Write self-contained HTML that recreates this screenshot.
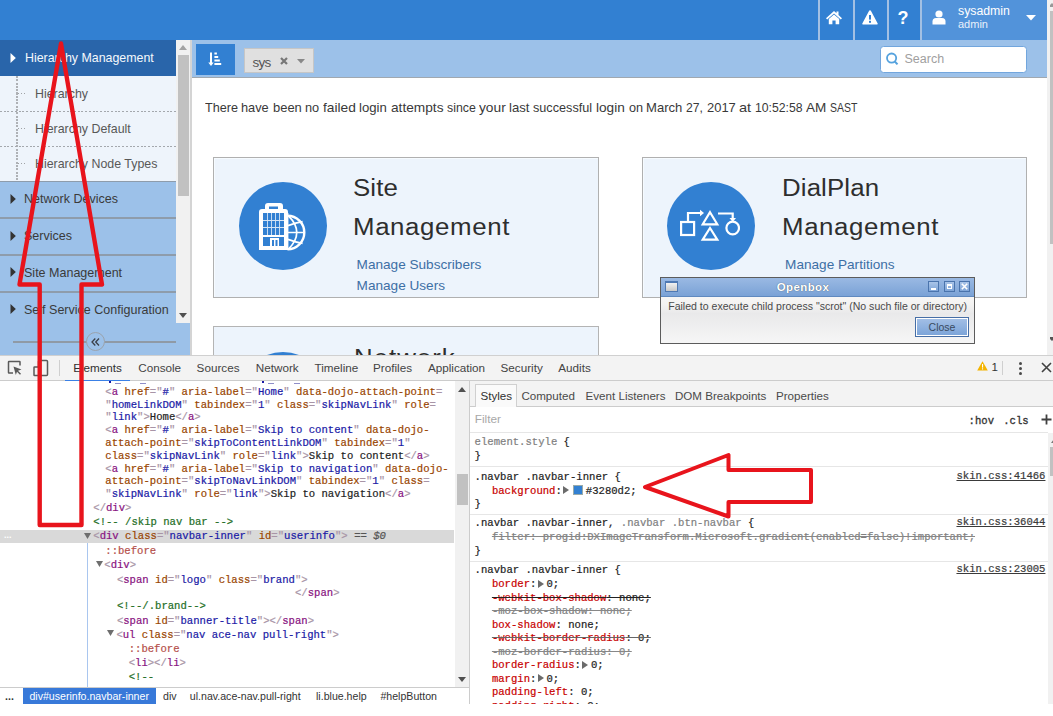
<!DOCTYPE html>
<html><head><meta charset="utf-8"><style>
html,body{margin:0;padding:0;width:1053px;height:716px;overflow:hidden;background:#fff;position:relative}
.t{position:absolute;white-space:pre;font-family:'Liberation Sans', sans-serif}
.m{-webkit-text-stroke-width:0.2px}
.b{position:absolute}
</style></head><body>
<div class="b" style="left:0px;top:0px;width:1047px;height:40px;background:#3280d2"></div>
<div class="b" style="left:818px;top:0px;width:2px;height:40px;background:#a3c0e3"></div>
<div class="b" style="left:853px;top:0px;width:2px;height:40px;background:#a3c0e3"></div>
<div class="b" style="left:887px;top:0px;width:2px;height:40px;background:#a3c0e3"></div>
<div class="b" style="left:920px;top:0px;width:2px;height:40px;background:#a3c0e3"></div>
<div class="b" style="left:922px;top:0px;width:125px;height:40px;background:#5293da"></div>
<svg class="b" style="left:825px;top:10px" width="18" height="15" viewBox="0 0 18 15">
<path d="M9 1 L1 8.2 L2.2 9.4 L9 3.4 L15.8 9.4 L17 8.2 L13.5 5.1 L13.5 1.5 L11.5 1.5 L11.5 3.3 Z" fill="#fff"/>
<path d="M3.8 9 L9 4.5 L14.2 9 L14.2 14.2 L10.6 14.2 L10.6 10.6 L7.4 10.6 L7.4 14.2 L3.8 14.2 Z" fill="#fff"/>
</svg>
<svg class="b" style="left:862px;top:10px" width="16" height="15" viewBox="0 0 16 15">
<path d="M8 0.3 Q8.7 0.3 9 1 L15.7 13.4 Q16 14.4 15 14.4 L1 14.4 Q0 14.4 0.3 13.4 L7 1 Q7.3 0.3 8 0.3 Z" fill="#fff"/>
<rect x="7" y="5" width="2" height="4.6" fill="#3280d2"/>
<rect x="7" y="10.8" width="2" height="2" fill="#3280d2"/>
</svg>
<div class="t" style="left:897.50px;top:9.07px;font-size:18px;line-height:18px;color:#fff;font-family:'Liberation Sans', sans-serif;font-weight:bold">?</div>
<svg class="b" style="left:932px;top:10px" width="14" height="15" viewBox="0 0 14 15">
<circle cx="7" cy="4" r="3.6" fill="#fff"/>
<path d="M0.5 14.5 L0.5 11.5 Q0.5 8.3 4 8 L10 8 Q13.5 8.3 13.5 11.5 L13.5 14.5 Z" fill="#fff"/>
</svg>
<div class="t" style="left:958.00px;top:4.59px;font-size:12.3px;line-height:12.3px;color:#fff;font-family:'Liberation Sans', sans-serif;">sysadmin</div>
<div class="t" style="left:958.00px;top:18.69px;font-size:11px;line-height:11px;color:#e8f0fa;font-family:'Liberation Sans', sans-serif;">admin</div>
<svg class="b" style="left:1026px;top:15px" width="10" height="6" viewBox="0 0 10 6"><path d="M0 0 L10 0 L5 5.5 Z" fill="#fff"/></svg>
<div class="b" style="left:1047px;top:0px;width:6px;height:355px;background:#f1f1f1"></div>
<div class="b" style="left:1050px;top:11px;width:3px;height:233px;background:#c1c1c1"></div>
<svg class="b" style="left:1050px;top:337px" width="3" height="4" viewBox="0 0 3 4"><path d="M-2 0 L6 0 L2 4 Z" fill="#555"/></svg>
<svg class="b" style="left:1050px;top:3px" width="3" height="4" viewBox="0 0 3 4"><path d="M-2 4 L6 4 L2 0 Z" fill="#999"/></svg>
<div class="b" style="left:0px;top:40px;width:190px;height:315px;background:#9cc1e9"></div>
<div class="b" style="left:0px;top:40px;width:176px;height:36px;background:#2965aa"></div>
<svg class="b" style="left:10px;top:53px" width="6" height="10" viewBox="0 0 6 10"><path d="M0.5 0 L5.8 5 L0.5 10 Z" fill="#fff"/></svg>
<div class="t" style="left:25.00px;top:52.41px;font-size:12.4px;line-height:12.4px;color:#f4f8fc;font-family:'Liberation Sans', sans-serif;">Hierarchy Management</div>
<div class="b" style="left:0px;top:76px;width:176px;height:105px;background:#eef4fb"></div>
<div class="b" style="left:16px;top:76px;width:1.5px;height:105px;background:repeating-linear-gradient(180deg,#aeb1b5 0 2px,transparent 2px 3.3px)"></div>
<div class="b" style="left:18px;top:93px;width:8px;height:1px;background:repeating-linear-gradient(90deg,#a0a3a6 0 1.5px,transparent 1.5px 3px)"></div>
<div class="t" style="left:35.00px;top:87.51px;font-size:12.4px;line-height:12.4px;color:#585858;font-family:'Liberation Sans', sans-serif;">Hierarchy</div>
<div class="b" style="left:18px;top:128px;width:8px;height:1px;background:repeating-linear-gradient(90deg,#a0a3a6 0 1.5px,transparent 1.5px 3px)"></div>
<div class="b" style="left:0;top:111px;width:176px;height:1px;background:repeating-linear-gradient(90deg,#a4a8ad 0 2px,transparent 2px 3.7px)"></div>
<div class="t" style="left:35.00px;top:122.51px;font-size:12.4px;line-height:12.4px;color:#585858;font-family:'Liberation Sans', sans-serif;">Hierarchy Default</div>
<div class="b" style="left:18px;top:163px;width:8px;height:1px;background:repeating-linear-gradient(90deg,#a0a3a6 0 1.5px,transparent 1.5px 3px)"></div>
<div class="b" style="left:0;top:146px;width:176px;height:1px;background:repeating-linear-gradient(90deg,#a4a8ad 0 2px,transparent 2px 3.7px)"></div>
<div class="t" style="left:35.00px;top:157.51px;font-size:12.4px;line-height:12.4px;color:#585858;font-family:'Liberation Sans', sans-serif;">Hierarchy Node Types</div>
<div class="b" style="left:0;top:180.5px;width:176px;height:1.6px;background:#8e9cab"></div>
<svg class="b" style="left:10px;top:194.0px" width="6" height="10" viewBox="0 0 6 10"><path d="M0.5 0 L5.8 5 L0.5 10 Z" fill="#333"/></svg>
<div class="t" style="left:24.00px;top:193.41px;font-size:12.52px;line-height:12.52px;color:#3a3a3a;font-family:'Liberation Sans', sans-serif;">Network Devices</div>
<div class="b" style="left:0;top:217px;width:176px;height:1.6px;background:#8e9cab"></div>
<svg class="b" style="left:10px;top:230.7px" width="6" height="10" viewBox="0 0 6 10"><path d="M0.5 0 L5.8 5 L0.5 10 Z" fill="#333"/></svg>
<div class="t" style="left:24.00px;top:230.11px;font-size:12.52px;line-height:12.52px;color:#3a3a3a;font-family:'Liberation Sans', sans-serif;">Services</div>
<div class="b" style="left:0;top:254px;width:176px;height:1.6px;background:#8e9cab"></div>
<svg class="b" style="left:10px;top:267.4px" width="6" height="10" viewBox="0 0 6 10"><path d="M0.5 0 L5.8 5 L0.5 10 Z" fill="#333"/></svg>
<div class="t" style="left:24.00px;top:266.81px;font-size:12.52px;line-height:12.52px;color:#3a3a3a;font-family:'Liberation Sans', sans-serif;">Site Management</div>
<div class="b" style="left:0;top:291px;width:176px;height:1.6px;background:#8e9cab"></div>
<svg class="b" style="left:10px;top:304.1px" width="6" height="10" viewBox="0 0 6 10"><path d="M0.5 0 L5.8 5 L0.5 10 Z" fill="#333"/></svg>
<div class="t" style="left:24.00px;top:303.51px;font-size:12.52px;line-height:12.52px;color:#3a3a3a;font-family:'Liberation Sans', sans-serif;">Self Service Configuration</div>
<div class="b" style="left:176px;top:40px;width:14px;height:283px;background:#f1f1f1"></div>
<div class="b" style="left:178px;top:55px;width:11px;height:141px;background:#c1c1c1"></div>
<svg class="b" style="left:179px;top:45px" width="8" height="5" viewBox="0 0 8 5"><path d="M0 5 L4 0 L8 5 Z" fill="#a3a3a3"/></svg>
<svg class="b" style="left:179px;top:313px" width="8" height="5" viewBox="0 0 8 5"><path d="M0 0 L4 5 L8 0 Z" fill="#505050"/></svg>
<div class="b" style="left:13px;top:341px;width:163px;height:1.5px;background:#8f9aa6"></div>
<div class="b" style="left:86px;top:332px;width:19px;height:19px;border-radius:50%;border:1px solid #9aa3ad;background:#9cc1e9;box-sizing:border-box"></div>
<svg class="b" style="left:91px;top:337.5px" width="9" height="8" viewBox="0 0 9 8"><path d="M4.3 0.5 L1 4 L4.3 7.5 M8 0.5 L4.7 4 L8 7.5" stroke="#3a3f48" stroke-width="1.3" fill="none"/></svg>
<div class="b" style="left:190px;top:40px;width:2px;height:315px;background:#d4d4d4"></div>
<div class="b" style="left:192px;top:40px;width:855px;height:37px;background:#9cc1e9"></div>
<div class="b" style="left:192px;top:77px;width:855px;height:1px;background:#a0a8b0"></div>
<div class="b" style="left:196px;top:44px;width:39px;height:31px;background:#3280d2"></div>
<svg class="b" style="left:208px;top:52px" width="14" height="15" viewBox="0 0 14 15">
<rect x="2" y="0.5" width="2" height="11" fill="#fff"/>
<path d="M0.3 10.6 L5.7 10.6 L3 14 Z" fill="#fff"/>
<rect x="6.4" y="0.5" width="2.5" height="2" fill="#fff"/>
<rect x="6.4" y="4" width="3.8" height="2" fill="#fff"/>
<rect x="6.4" y="7.5" width="5.4" height="2" fill="#fff"/>
<rect x="6.4" y="11" width="6.8" height="2" fill="#fff"/>
</svg>
<div class="b" style="left:244px;top:48px;width:70px;height:25px;background:#e0e0e0;border:1px solid #c6c6c6;box-sizing:border-box"></div>
<div class="t" style="left:252.50px;top:56.08px;font-size:13.5px;line-height:13.5px;color:#555;font-family:'Liberation Sans', sans-serif;letter-spacing:-0.8px">sys</div>
<svg class="b" style="left:280px;top:57px" width="8" height="8" viewBox="0 0 8 8"><path d="M1 1 L7 7 M7 1 L1 7" stroke="#777" stroke-width="2.2"/></svg>
<svg class="b" style="left:297px;top:58.5px" width="8" height="5" viewBox="0 0 8 5"><path d="M0 0 L8 0 L4 4.5 Z" fill="#888"/></svg>
<div class="b" style="left:880px;top:46px;width:146.5px;height:27px;background:#fff;border:1px solid #72a6dd;border-radius:3.5px;box-sizing:border-box"></div>
<svg class="b" style="left:885px;top:52px" width="15" height="15" viewBox="0 0 15 15"><circle cx="6.6" cy="6.1" r="4.6" stroke="#55a2de" stroke-width="1.8" fill="none"/><path d="M9.8 9.5 L12.5 12.4" stroke="#55a2de" stroke-width="2"/></svg>
<div class="t" style="left:904.50px;top:52.92px;font-size:12.5px;line-height:12.5px;color:#a0a0a0;font-family:'Liberation Sans', sans-serif;">Search</div>
<div class="b" style="left:192px;top:78px;width:855px;height:277px;background:#fff"></div>
<div class="t" style="left:204.60px;top:102.17px;font-size:12.8px;line-height:12.8px;color:#393939;font-family:'Liberation Sans', sans-serif;transform:scaleX(0.987);transform-origin:0 0">There</div>
<div class="t" style="left:241.20px;top:102.17px;font-size:12.8px;line-height:12.8px;color:#393939;font-family:'Liberation Sans', sans-serif;transform:scaleX(0.998);transform-origin:0 0">have</div>
<div class="t" style="left:272.50px;top:102.17px;font-size:12.8px;line-height:12.8px;color:#393939;font-family:'Liberation Sans', sans-serif;transform:scaleX(1.012);transform-origin:0 0">been</div>
<div class="t" style="left:304.90px;top:102.17px;font-size:12.8px;line-height:12.8px;color:#393939;font-family:'Liberation Sans', sans-serif;transform:scaleX(0.998);transform-origin:0 0">no</div>
<div class="t" style="left:322.70px;top:102.17px;font-size:12.8px;line-height:12.8px;color:#393939;font-family:'Liberation Sans', sans-serif;transform:scaleX(1.075);transform-origin:0 0">failed</div>
<div class="t" style="left:359.20px;top:102.17px;font-size:12.8px;line-height:12.8px;color:#393939;font-family:'Liberation Sans', sans-serif;transform:scaleX(1.028);transform-origin:0 0">login</div>
<div class="t" style="left:390.60px;top:102.17px;font-size:12.8px;line-height:12.8px;color:#393939;font-family:'Liberation Sans', sans-serif;transform:scaleX(1.07);transform-origin:0 0">attempts</div>
<div class="t" style="left:446.70px;top:102.17px;font-size:12.8px;line-height:12.8px;color:#393939;font-family:'Liberation Sans', sans-serif;transform:scaleX(0.964);transform-origin:0 0">since</div>
<div class="t" style="left:479.10px;top:102.17px;font-size:12.8px;line-height:12.8px;color:#393939;font-family:'Liberation Sans', sans-serif;transform:scaleX(1.073);transform-origin:0 0">your</div>
<div class="t" style="left:509.40px;top:102.17px;font-size:12.8px;line-height:12.8px;color:#393939;font-family:'Liberation Sans', sans-serif;transform:scaleX(1.024);transform-origin:0 0">last</div>
<div class="t" style="left:533.40px;top:102.17px;font-size:12.8px;line-height:12.8px;color:#393939;font-family:'Liberation Sans', sans-serif;transform:scaleX(0.989);transform-origin:0 0">successful</div>
<div class="t" style="left:596.10px;top:102.17px;font-size:12.8px;line-height:12.8px;color:#393939;font-family:'Liberation Sans', sans-serif;transform:scaleX(1.065);transform-origin:0 0">login</div>
<div class="t" style="left:628.50px;top:102.17px;font-size:12.8px;line-height:12.8px;color:#393939;font-family:'Liberation Sans', sans-serif;transform:scaleX(0.991);transform-origin:0 0">on</div>
<div class="t" style="left:646.20px;top:102.17px;font-size:12.8px;line-height:12.8px;color:#393939;font-family:'Liberation Sans', sans-serif;transform:scaleX(1.021);transform-origin:0 0">March</div>
<div class="t" style="left:686.10px;top:102.17px;font-size:12.8px;line-height:12.8px;color:#393939;font-family:'Liberation Sans', sans-serif;transform:scaleX(0.95);transform-origin:0 0">27,</div>
<div class="t" style="left:706.60px;top:102.17px;font-size:12.8px;line-height:12.8px;color:#393939;font-family:'Liberation Sans', sans-serif;transform:scaleX(1.012);transform-origin:0 0">2017</div>
<div class="t" style="left:739.00px;top:102.17px;font-size:12.8px;line-height:12.8px;color:#393939;font-family:'Liberation Sans', sans-serif;transform:scaleX(1.134);transform-origin:0 0">at</div>
<div class="t" style="left:754.70px;top:102.17px;font-size:12.8px;line-height:12.8px;color:#393939;font-family:'Liberation Sans', sans-serif;transform:scaleX(0.956);transform-origin:0 0">10:52:58</div>
<div class="t" style="left:805.90px;top:102.17px;font-size:12.8px;line-height:12.8px;color:#393939;font-family:'Liberation Sans', sans-serif;transform:scaleX(1.058);transform-origin:0 0">AM</div>
<div class="t" style="left:829.80px;top:102.17px;font-size:12.8px;line-height:12.8px;color:#393939;font-family:'Liberation Sans', sans-serif;transform:scaleX(0.817);transform-origin:0 0">SAST</div>
<div class="b" style="left:213px;top:157px;width:386px;height:141px;background:#edf4fc;border:1px solid #b0b0b0;box-sizing:border-box;box-shadow:inset 1px 1px 0 #f6fbff"></div>
<div class="b" style="left:239px;top:182px;width:88px;height:88px;border-radius:50%;background:#3280d2"></div>
<svg class="b" style="left:259px;top:203px" width="48" height="50" viewBox="0 0 48 50">
<path d="M0 9 Q0 6 3 6 L6 6 L6 3 Q6 0 9 0 L21 0 Q24 0 24 3 L24 6 L26 6 Q29 6 29 9 L29 47 L0 47 Z" fill="#fff"/>
<rect x="10" y="3.5" width="9" height="2.5" fill="#3280d2"/>
<g fill="#3280d2">
<rect x="4" y="10" width="21" height="22"/>
<rect x="4" y="34" width="21" height="9"/>
</g>
<g fill="#fff">
<g opacity="0.8"><rect x="8.1" y="10" width="0.9" height="22"/><rect x="12.1" y="10" width="0.9" height="22"/><rect x="16.1" y="10" width="0.9" height="22"/><rect x="20.1" y="10" width="0.9" height="22"/>
<rect x="4" y="17" width="21" height="1"/><rect x="4" y="24" width="21" height="1"/></g>
<rect x="11" y="35" width="9" height="12"/>
</g>
<rect x="13" y="37" width="2" height="6" fill="#3280d2"/><rect x="16.5" y="37" width="2" height="6" fill="#3280d2"/>
<path d="M28.5 12.7 A16.8 16.8 0 0 1 28.5 46.3" stroke="#fff" stroke-width="2.4" fill="none"/>
<path d="M29.5 12.9 Q46 29.5 29.5 46.1" stroke="#fff" stroke-width="1.7" fill="none"/>
<path d="M29 22.6 Q37 19.6 43.6 18.6 M29 29.5 L45.5 29.5 M29 36.4 Q37 39.4 43.6 40.4" stroke="#fff" stroke-width="1.7" fill="none"/>
<path d="M28.6 10 L28.6 47" stroke="#fff" stroke-width="1.6"/>
</svg>
<div class="t" style="left:353.30px;top:177.42px;font-size:23.5px;line-height:23.5px;color:#2e2e2e;font-family:'Liberation Sans', sans-serif;letter-spacing:0.1px;transform:scaleX(1.1);transform-origin:0 0">Site</div>
<div class="t" style="left:353.30px;top:215.72px;font-size:23.5px;line-height:23.5px;color:#2e2e2e;font-family:'Liberation Sans', sans-serif;letter-spacing:0.55px;transform:scaleX(1.1);transform-origin:0 0">Management</div>
<div class="t" style="left:356.60px;top:258.09px;font-size:13.6px;line-height:13.6px;color:#3d6fa5;font-family:'Liberation Sans', sans-serif;">Manage Subscribers</div>
<div class="t" style="left:356.60px;top:278.89px;font-size:13.6px;line-height:13.6px;color:#3d6fa5;font-family:'Liberation Sans', sans-serif;">Manage Users</div>
<div class="b" style="left:642px;top:157px;width:385px;height:141px;background:#edf4fc;border:1px solid #b0b0b0;box-sizing:border-box;box-shadow:inset 1px 1px 0 #f6fbff"></div>
<div class="b" style="left:667.0px;top:182px;width:88px;height:88px;border-radius:50%;background:#3280d2"></div>
<svg class="b" style="left:680.0px;top:209px" width="60" height="34" viewBox="0 0 60 34">
<g stroke="#fff" stroke-width="2.2" fill="none">
<rect x="1.1" y="13" width="13" height="13"/>
<path d="M8 13 L8 4 L20 4"/>
<path d="M30 3.2 L37.3 15.3 L22.7 15.3 Z"/>
<path d="M30 19 L37.3 30.6 L22.7 30.6 Z"/>
<path d="M38 4.5 L52.7 4.5 L52.7 9"/>
<circle cx="52.7" cy="19" r="6.3"/>
</g>
<path d="M20 0.8 L24 4 L20 7.2 Z" fill="#fff"/>
<path d="M49.5 9 L56 9 L52.7 13 Z" fill="#fff"/>
</svg>
<div class="t" style="left:781.80px;top:177.42px;font-size:23.5px;line-height:23.5px;color:#2e2e2e;font-family:'Liberation Sans', sans-serif;letter-spacing:0.1px;transform:scaleX(1.1);transform-origin:0 0">DialPlan</div>
<div class="t" style="left:781.80px;top:215.72px;font-size:23.5px;line-height:23.5px;color:#2e2e2e;font-family:'Liberation Sans', sans-serif;letter-spacing:0.55px;transform:scaleX(1.1);transform-origin:0 0">Management</div>
<div class="t" style="left:785.10px;top:258.09px;font-size:13.6px;line-height:13.6px;color:#3d6fa5;font-family:'Liberation Sans', sans-serif;">Manage Partitions</div>
<div class="b" style="left:213px;top:326px;width:386px;height:29px;overflow:hidden">
<div class="b" style="left:0;top:0;width:386px;height:141px;background:#edf4fc;border:1px solid #b4b4b4;box-sizing:border-box"></div>
<div class="b" style="left:26px;top:26px;width:88px;height:88px;border-radius:50%;background:#3280d2"></div>
<div class="t" style="left:141.30px;top:21.12px;font-size:23.5px;line-height:23.5px;color:#2e2e2e;font-family:'Liberation Sans', sans-serif;letter-spacing:0.9px;transform:scaleX(1.1);transform-origin:0 0">Network</div>
</div>
<div class="b" style="left:660px;top:277px;width:315px;height:67px;border:1px solid #5c5c5c;box-sizing:border-box;background:linear-gradient(#fdfdfd 0%,#f4f3f2 40%,#e9e9ea 55%,#f6f6f6 100%)"></div>
<div class="b" style="left:661px;top:278px;width:313px;height:19px;background:linear-gradient(#9ab9e3,#7aa2d6);border-bottom:1px solid #5f89bf;box-sizing:border-box"></div>
<div class="b" style="left:665px;top:281px;width:13px;height:11px;border:1px solid #4f79b3;background:linear-gradient(#f2f2f2,#c8c8c8);box-sizing:border-box;border-top-width:2px"></div>
<div class="t" style="left:0.00px;top:282.07px;font-size:11.5px;line-height:11.5px;color:#fff;font-family:'Liberation Sans', sans-serif;left:753px;width:100px;text-align:center;font-weight:bold;letter-spacing:0.4px;text-shadow:0 0 1px #345">Openbox</div>
<div class="b" style="left:928px;top:281px;width:11px;height:11px;border:1px solid #4a74ad;background:linear-gradient(#a9c4e8,#7ea5d8);box-sizing:border-box"></div>
<div class="b" style="left:944px;top:281px;width:11px;height:11px;border:1px solid #4a74ad;background:linear-gradient(#a9c4e8,#7ea5d8);box-sizing:border-box"></div>
<div class="b" style="left:959px;top:281px;width:11px;height:11px;border:1px solid #4a74ad;background:linear-gradient(#a9c4e8,#7ea5d8);box-sizing:border-box"></div>
<div class="b" style="left:931px;top:288px;width:5px;height:2px;background:#fff"></div>
<div class="b" style="left:947px;top:284px;width:5px;height:5px;border:1px solid #fff;border-top-width:2px;box-sizing:border-box"></div>
<svg class="b" style="left:961px;top:283px" width="7" height="7" viewBox="0 0 7 7"><path d="M0.8 0.8 L6.2 6.2 M6.2 0.8 L0.8 6.2" stroke="#fff" stroke-width="1.6"/></svg>
<div class="t" style="left:668.20px;top:300.67px;font-size:10.55px;line-height:10.55px;color:#4a4a4a;font-family:'Liberation Sans', sans-serif;">Failed to execute child process &quot;scrot&quot; (No such file or directory)</div>
<div class="b" style="left:915px;top:317px;width:54px;height:20px;border:1px solid #466ea6;background:linear-gradient(#a4c0e6,#7aa3d8);box-sizing:border-box;box-shadow:inset 0 0 0 1px #fff"></div>
<div class="t" style="left:915.00px;top:321.62px;font-size:10.5px;line-height:10.5px;color:#3a4a60;font-family:'Liberation Sans', sans-serif;width:54px;text-align:center">Close</div>
<div class="b" style="left:0px;top:355px;width:1053px;height:349px;background:#fff"></div>
<div class="b" style="left:0px;top:355px;width:1053px;height:1px;background:#d0d0d0"></div>
<div class="b" style="left:0px;top:356px;width:1053px;height:24px;background:#f3f3f3"></div>
<div class="b" style="left:0px;top:380px;width:1053px;height:1px;background:#cccccc"></div>
<svg class="b" style="left:7px;top:360px" width="16" height="16" viewBox="0 0 16 16">
<path d="M6 13 L2 13 Q1.5 13 1.5 12.5 L1.5 2 Q1.5 1.5 2 1.5 L12.5 1.5 Q13 1.5 13 2 L13 5.5" stroke="#5a5a5a" stroke-width="1.5" fill="none"/>
<path d="M6.5 6.5 L14.5 9.5 L11 10.8 L14 13.8 L13 14.8 L10 11.8 L8.8 15 Z" fill="#5a5a5a"/>
</svg>
<svg class="b" style="left:33px;top:359px" width="16" height="18" viewBox="0 0 16 18">
<rect x="5.5" y="1.5" width="9" height="15" rx="1" stroke="#5a5a5a" stroke-width="1.5" fill="none"/>
<rect x="1" y="8" width="5" height="8.5" rx="0.5" stroke="#5a5a5a" stroke-width="1.5" fill="#f3f3f3"/>
</svg>
<div class="b" style="left:59px;top:360px;width:1px;height:16px;background:#cfcfcf"></div>
<div class="t" style="left:73.20px;top:361.70px;font-size:11.7px;line-height:11.7px;color:#303030;font-family:'Liberation Sans', sans-serif;">Elements</div>
<div class="t" style="left:138.20px;top:361.70px;font-size:11.7px;line-height:11.7px;color:#444;font-family:'Liberation Sans', sans-serif;">Console</div>
<div class="t" style="left:196.60px;top:361.70px;font-size:11.7px;line-height:11.7px;color:#444;font-family:'Liberation Sans', sans-serif;">Sources</div>
<div class="t" style="left:255.80px;top:361.70px;font-size:11.7px;line-height:11.7px;color:#444;font-family:'Liberation Sans', sans-serif;">Network</div>
<div class="t" style="left:314.50px;top:361.70px;font-size:11.7px;line-height:11.7px;color:#444;font-family:'Liberation Sans', sans-serif;">Timeline</div>
<div class="t" style="left:373.00px;top:361.70px;font-size:11.7px;line-height:11.7px;color:#444;font-family:'Liberation Sans', sans-serif;">Profiles</div>
<div class="t" style="left:427.90px;top:361.70px;font-size:11.7px;line-height:11.7px;color:#444;font-family:'Liberation Sans', sans-serif;">Application</div>
<div class="t" style="left:500.50px;top:361.70px;font-size:11.7px;line-height:11.7px;color:#444;font-family:'Liberation Sans', sans-serif;">Security</div>
<div class="t" style="left:558.30px;top:361.70px;font-size:11.7px;line-height:11.7px;color:#444;font-family:'Liberation Sans', sans-serif;">Audits</div>
<div class="b" style="left:65px;top:379.5px;width:65px;height:1.5px;background:#3a80e6"></div>
<svg class="b" style="left:977px;top:361px" width="11" height="10" viewBox="0 0 11 10">
<path d="M5.5 0.2 L10.8 9.6 L0.2 9.6 Z" fill="#f4b400"/><rect x="5" y="3" width="1.1" height="3.6" fill="#fff"/><rect x="5" y="7.3" width="1.1" height="1.2" fill="#fff"/>
</svg>
<div class="t" style="left:991.50px;top:362.27px;font-size:11.5px;line-height:11.5px;color:#333;font-family:'Liberation Sans', sans-serif;">1</div>
<div class="b" style="left:1002px;top:361px;width:1px;height:14px;background:#cfcfcf"></div>
<div class="b" style="left:1018.5px;top:362px;width:3px;height:3px;border-radius:50%;background:#4a4a4a"></div>
<div class="b" style="left:1018.5px;top:367px;width:3px;height:3px;border-radius:50%;background:#4a4a4a"></div>
<div class="b" style="left:1018.5px;top:372px;width:3px;height:3px;border-radius:50%;background:#4a4a4a"></div>
<svg class="b" style="left:1041px;top:362px" width="11" height="11" viewBox="0 0 11 11"><path d="M1 1 L10 10 M10 1 L1 10" stroke="#404040" stroke-width="1.6"/></svg>
<div class="b" style="left:455px;top:381px;width:14px;height:306px;background:#f1f1f1"></div>
<div class="b" style="left:457px;top:474px;width:10.5px;height:31px;background:#c1c1c1"></div>
<svg class="b" style="left:458px;top:387px" width="8" height="5" viewBox="0 0 8 5"><path d="M0 5 L4 0 L8 5 Z" fill="#505050"/></svg>
<svg class="b" style="left:458px;top:677px" width="8" height="5" viewBox="0 0 8 5"><path d="M0 0 L4 5 L8 0 Z" fill="#505050"/></svg>
<div class="b" style="left:469px;top:381px;width:1px;height:323px;background:#cccccc"></div>
<div class="b" style="left:0px;top:529.5px;width:454px;height:13.3px;background:#d9d9d9"></div>
<div class="t" style="left:4.00px;top:530.99px;font-size:9px;line-height:9px;color:#fff;font-family:'Liberation Sans', sans-serif;font-weight:bold;letter-spacing:0px">...</div>
<div class="b" style="left:87px;top:543px;width:1px;height:144px;background:#a9c6ef"></div>
<div class="b" style="left:115px;top:382.5px;width:6px;height:1px;background:#8e8ec9"></div>
<div class="b" style="left:140px;top:382.5px;width:6px;height:1px;background:#8e8ec9"></div>
<div class="b" style="left:268px;top:382.5px;width:6px;height:1px;background:#8e8ec9"></div>
<div class="b" style="left:294px;top:382.5px;width:6px;height:1px;background:#8e8ec9"></div>
<div class="b" style="left:109px;top:381px;width:1.5px;height:2px;background:#1a1aa6"></div>
<div class="b" style="left:262px;top:381px;width:1.5px;height:2px;background:#1a1aa6"></div>
<div class="t m" style="left:105.30px;top:386.98px;font-size:10.6px;line-height:10.6px;color:#222;font-family:'Liberation Mono', monospace;"><span style="color:#a894a6">&lt;</span><span style="color:#881280">a</span><span style="color:#222"> </span><span style="color:#994500">href</span><span style="color:#a894a6">=&quot;</span><span style="color:#1a1aa6">#</span><span style="color:#a894a6">&quot;</span><span style="color:#222"> </span><span style="color:#994500">aria-label</span><span style="color:#a894a6">=&quot;</span><span style="color:#1a1aa6">Home</span><span style="color:#a894a6">&quot;</span><span style="color:#222"> </span><span style="color:#994500">data-dojo-attach-point</span><span style="color:#a894a6">=</span></div>
<div class="t m" style="left:105.30px;top:399.68px;font-size:10.6px;line-height:10.6px;color:#222;font-family:'Liberation Mono', monospace;"><span style="color:#a894a6">&quot;</span><span style="color:#1a1aa6">homeLinkDOM</span><span style="color:#a894a6">&quot;</span><span style="color:#222"> </span><span style="color:#994500">tabindex</span><span style="color:#a894a6">=&quot;</span><span style="color:#1a1aa6">1</span><span style="color:#a894a6">&quot;</span><span style="color:#222"> </span><span style="color:#994500">class</span><span style="color:#a894a6">=&quot;</span><span style="color:#1a1aa6">skipNavLink</span><span style="color:#a894a6">&quot;</span><span style="color:#222"> </span><span style="color:#994500">role</span><span style="color:#a894a6">=</span></div>
<div class="t m" style="left:105.30px;top:412.18px;font-size:10.6px;line-height:10.6px;color:#222;font-family:'Liberation Mono', monospace;"><span style="color:#a894a6">&quot;</span><span style="color:#1a1aa6">link</span><span style="color:#a894a6">&quot;&gt;</span><span style="color:#222">Home</span><span style="color:#a894a6">&lt;/</span><span style="color:#881280">a</span><span style="color:#a894a6">&gt;</span></div>
<div class="t m" style="left:105.30px;top:425.38px;font-size:10.6px;line-height:10.6px;color:#222;font-family:'Liberation Mono', monospace;"><span style="color:#a894a6">&lt;</span><span style="color:#881280">a</span><span style="color:#222"> </span><span style="color:#994500">href</span><span style="color:#a894a6">=&quot;</span><span style="color:#1a1aa6">#</span><span style="color:#a894a6">&quot;</span><span style="color:#222"> </span><span style="color:#994500">aria-label</span><span style="color:#a894a6">=&quot;</span><span style="color:#1a1aa6">Skip to content</span><span style="color:#a894a6">&quot;</span><span style="color:#222"> </span><span style="color:#994500">data-dojo-</span></div>
<div class="t m" style="left:105.30px;top:438.08px;font-size:10.6px;line-height:10.6px;color:#222;font-family:'Liberation Mono', monospace;"><span style="color:#994500">attach-point</span><span style="color:#a894a6">=&quot;</span><span style="color:#1a1aa6">skipToContentLinkDOM</span><span style="color:#a894a6">&quot;</span><span style="color:#222"> </span><span style="color:#994500">tabindex</span><span style="color:#a894a6">=&quot;</span><span style="color:#1a1aa6">1</span><span style="color:#a894a6">&quot;</span></div>
<div class="t m" style="left:105.30px;top:450.58px;font-size:10.6px;line-height:10.6px;color:#222;font-family:'Liberation Mono', monospace;"><span style="color:#994500">class</span><span style="color:#a894a6">=&quot;</span><span style="color:#1a1aa6">skipNavLink</span><span style="color:#a894a6">&quot;</span><span style="color:#222"> </span><span style="color:#994500">role</span><span style="color:#a894a6">=&quot;</span><span style="color:#1a1aa6">link</span><span style="color:#a894a6">&quot;&gt;</span><span style="color:#222">Skip to content</span><span style="color:#a894a6">&lt;/</span><span style="color:#881280">a</span><span style="color:#a894a6">&gt;</span></div>
<div class="t m" style="left:105.30px;top:463.88px;font-size:10.6px;line-height:10.6px;color:#222;font-family:'Liberation Mono', monospace;"><span style="color:#a894a6">&lt;</span><span style="color:#881280">a</span><span style="color:#222"> </span><span style="color:#994500">href</span><span style="color:#a894a6">=&quot;</span><span style="color:#1a1aa6">#</span><span style="color:#a894a6">&quot;</span><span style="color:#222"> </span><span style="color:#994500">aria-label</span><span style="color:#a894a6">=&quot;</span><span style="color:#1a1aa6">Skip to navigation</span><span style="color:#a894a6">&quot;</span><span style="color:#222"> </span><span style="color:#994500">data-dojo-</span></div>
<div class="t m" style="left:105.30px;top:476.48px;font-size:10.6px;line-height:10.6px;color:#222;font-family:'Liberation Mono', monospace;"><span style="color:#994500">attach-point</span><span style="color:#a894a6">=&quot;</span><span style="color:#1a1aa6">skipToNavLinkDOM</span><span style="color:#a894a6">&quot;</span><span style="color:#222"> </span><span style="color:#994500">tabindex</span><span style="color:#a894a6">=&quot;</span><span style="color:#1a1aa6">1</span><span style="color:#a894a6">&quot;</span><span style="color:#222"> </span><span style="color:#994500">class</span><span style="color:#a894a6">=</span></div>
<div class="t m" style="left:105.30px;top:488.88px;font-size:10.6px;line-height:10.6px;color:#222;font-family:'Liberation Mono', monospace;"><span style="color:#a894a6">&quot;</span><span style="color:#1a1aa6">skipNavLink</span><span style="color:#a894a6">&quot;</span><span style="color:#222"> </span><span style="color:#994500">role</span><span style="color:#a894a6">=&quot;</span><span style="color:#1a1aa6">link</span><span style="color:#a894a6">&quot;&gt;</span><span style="color:#222">Skip to navigation</span><span style="color:#a894a6">&lt;/</span><span style="color:#881280">a</span><span style="color:#a894a6">&gt;</span></div>
<div class="t m" style="left:93.30px;top:502.68px;font-size:10.6px;line-height:10.6px;color:#222;font-family:'Liberation Mono', monospace;"><span style="color:#a894a6">&lt;/</span><span style="color:#881280">div</span><span style="color:#a894a6">&gt;</span></div>
<div class="t m" style="left:93.30px;top:516.88px;font-size:10.6px;line-height:10.6px;color:#222;font-family:'Liberation Mono', monospace;"><span style="color:#236e25">&lt;!-- /skip nav bar --&gt;</span></div>
<svg class="b" style="left:84px;top:533px" width="7" height="6" viewBox="0 0 7 6"><path d="M0 0 L7 0 L3.5 6 Z" fill="#6e6e6e"/></svg>
<div class="t m" style="left:93.30px;top:531.18px;font-size:10.6px;line-height:10.6px;color:#222;font-family:'Liberation Mono', monospace;"><span style="color:#a894a6">&lt;</span><span style="color:#881280">div</span><span style="color:#222"> </span><span style="color:#994500">class</span><span style="color:#a894a6">=&quot;</span><span style="color:#1a1aa6">navbar-inner</span><span style="color:#a894a6">&quot;</span><span style="color:#222"> </span><span style="color:#994500">id</span><span style="color:#a894a6">=&quot;</span><span style="color:#1a1aa6">userinfo</span><span style="color:#a894a6">&quot;&gt;</span></div>
<div class="t m" style="left:354.20px;top:530.98px;font-size:10.6px;line-height:10.6px;color:#555;font-family:'Liberation Mono', monospace;">== <i>$0</i></div>
<div class="t m" style="left:105.30px;top:545.88px;font-size:10.6px;line-height:10.6px;color:#222;font-family:'Liberation Mono', monospace;"><span style="color:#b5504a">::before</span></div>
<svg class="b" style="left:95.5px;top:561px" width="7" height="6" viewBox="0 0 7 6"><path d="M0 0 L7 0 L3.5 6 Z" fill="#6e6e6e"/></svg>
<div class="t m" style="left:104.30px;top:560.08px;font-size:10.6px;line-height:10.6px;color:#222;font-family:'Liberation Mono', monospace;"><span style="color:#a894a6">&lt;</span><span style="color:#881280">div</span><span style="color:#a894a6">&gt;</span></div>
<div class="t m" style="left:116.90px;top:575.08px;font-size:10.6px;line-height:10.6px;color:#222;font-family:'Liberation Mono', monospace;"><span style="color:#a894a6">&lt;</span><span style="color:#881280">span</span><span style="color:#222"> </span><span style="color:#994500">id</span><span style="color:#a894a6">=&quot;</span><span style="color:#1a1aa6">logo</span><span style="color:#a894a6">&quot;</span><span style="color:#222"> </span><span style="color:#994500">class</span><span style="color:#a894a6">=&quot;</span><span style="color:#1a1aa6">brand</span><span style="color:#a894a6">&quot;&gt;</span></div>
<div class="t m" style="left:295.00px;top:587.68px;font-size:10.6px;line-height:10.6px;color:#222;font-family:'Liberation Mono', monospace;"><span style="color:#a894a6">&lt;/</span><span style="color:#881280">span</span><span style="color:#a894a6">&gt;</span></div>
<div class="t m" style="left:116.90px;top:601.38px;font-size:10.6px;line-height:10.6px;color:#222;font-family:'Liberation Mono', monospace;"><span style="color:#236e25">&lt;!--/.brand--&gt;</span></div>
<div class="t m" style="left:116.90px;top:615.58px;font-size:10.6px;line-height:10.6px;color:#222;font-family:'Liberation Mono', monospace;"><span style="color:#a894a6">&lt;</span><span style="color:#881280">span</span><span style="color:#222"> </span><span style="color:#994500">id</span><span style="color:#a894a6">=&quot;</span><span style="color:#1a1aa6">banner-title</span><span style="color:#a894a6">&quot;&gt;</span><span style="color:#a894a6">&lt;/</span><span style="color:#881280">span</span><span style="color:#a894a6">&gt;</span></div>
<svg class="b" style="left:107px;top:630px" width="7" height="6" viewBox="0 0 7 6"><path d="M0 0 L7 0 L3.5 6 Z" fill="#6e6e6e"/></svg>
<div class="t m" style="left:116.40px;top:629.78px;font-size:10.6px;line-height:10.6px;color:#222;font-family:'Liberation Mono', monospace;"><span style="color:#a894a6">&lt;</span><span style="color:#881280">ul</span><span style="color:#222"> </span><span style="color:#994500">class</span><span style="color:#a894a6">=&quot;</span><span style="color:#1a1aa6">nav ace-nav pull-right</span><span style="color:#a894a6">&quot;&gt;</span></div>
<div class="t m" style="left:128.70px;top:643.98px;font-size:10.6px;line-height:10.6px;color:#222;font-family:'Liberation Mono', monospace;"><span style="color:#b5504a">::before</span></div>
<div class="t m" style="left:128.70px;top:658.28px;font-size:10.6px;line-height:10.6px;color:#222;font-family:'Liberation Mono', monospace;"><span style="color:#a894a6">&lt;</span><span style="color:#881280">li</span><span style="color:#a894a6">&gt;&lt;/</span><span style="color:#881280">li</span><span style="color:#a894a6">&gt;</span></div>
<div class="t m" style="left:128.70px;top:672.48px;font-size:10.6px;line-height:10.6px;color:#222;font-family:'Liberation Mono', monospace;"><span style="color:#236e25">&lt;!--</span></div>
<div class="b" style="left:0px;top:687px;width:469px;height:1px;background:#cccccc"></div>
<div class="b" style="left:0px;top:688px;width:469px;height:16px;background:#fff"></div>
<div class="t" style="left:5.00px;top:690.53px;font-size:10.6px;line-height:10.6px;color:#333;font-family:'Liberation Sans', sans-serif;font-weight:bold">...</div>
<div class="b" style="left:23px;top:688px;width:133px;height:16px;background:#3879d9"></div>
<div class="t" style="left:29.40px;top:691.03px;font-size:10.6px;line-height:10.6px;color:#fff;font-family:'Liberation Sans', sans-serif;">div#userinfo.navbar-inner</div>
<div class="t" style="left:163.00px;top:691.03px;font-size:10.6px;line-height:10.6px;color:#333;font-family:'Liberation Sans', sans-serif;">div</div>
<div class="t" style="left:189.80px;top:691.03px;font-size:10.6px;line-height:10.6px;color:#333;font-family:'Liberation Sans', sans-serif;">ul.nav.ace-nav.pull-right</div>
<div class="t" style="left:316.00px;top:691.03px;font-size:10.6px;line-height:10.6px;color:#333;font-family:'Liberation Sans', sans-serif;">li.blue.help</div>
<div class="t" style="left:380.40px;top:691.03px;font-size:10.6px;line-height:10.6px;color:#333;font-family:'Liberation Sans', sans-serif;">#helpButton</div>
<div class="b" style="left:470px;top:381px;width:583px;height:25px;background:#f3f3f3"></div>
<div class="b" style="left:470px;top:406px;width:583px;height:1px;background:#cccccc"></div>
<div class="b" style="left:475px;top:383.5px;width:42px;height:23.5px;background:#fafafa;border:1px solid #d0d0d0;border-bottom:none;box-sizing:border-box"></div>
<div class="t" style="left:480.50px;top:389.69px;font-size:11.6px;line-height:11.6px;color:#303030;font-family:'Liberation Sans', sans-serif;">Styles</div>
<div class="t" style="left:521.40px;top:389.69px;font-size:11.6px;line-height:11.6px;color:#4a4a4a;font-family:'Liberation Sans', sans-serif;">Computed</div>
<div class="t" style="left:585.60px;top:389.69px;font-size:11.6px;line-height:11.6px;color:#4a4a4a;font-family:'Liberation Sans', sans-serif;">Event Listeners</div>
<div class="t" style="left:674.90px;top:389.69px;font-size:11.6px;line-height:11.6px;color:#4a4a4a;font-family:'Liberation Sans', sans-serif;">DOM Breakpoints</div>
<div class="t" style="left:776.00px;top:389.69px;font-size:11.6px;line-height:11.6px;color:#4a4a4a;font-family:'Liberation Sans', sans-serif;">Properties</div>
<div class="t" style="left:474.70px;top:414.02px;font-size:11.8px;line-height:11.8px;color:#a8a8a8;font-family:'Liberation Sans', sans-serif;">Filter</div>
<div class="t m" style="left:968.60px;top:415.88px;font-size:10.6px;line-height:10.6px;color:#333;font-family:'Liberation Mono', monospace;-webkit-text-stroke:0.3px #333">:hov</div>
<div class="t m" style="left:1003.20px;top:415.88px;font-size:10.6px;line-height:10.6px;color:#333;font-family:'Liberation Mono', monospace;-webkit-text-stroke:0.3px #333">.cls</div>
<svg class="b" style="left:1041px;top:414px" width="11" height="11" viewBox="0 0 11 11"><path d="M5.5 0.5 L5.5 10.5 M0.5 5.5 L10.5 5.5" stroke="#404040" stroke-width="1.8"/></svg>
<div class="b" style="left:470px;top:432px;width:578px;height:1px;background:#e6e6e6"></div>
<div class="b" style="left:1048px;top:433px;width:5px;height:271px;background:#f1f1f1"></div>
<div class="b" style="left:1050px;top:447px;width:3px;height:29px;background:#c1c1c1"></div>
<svg class="b" style="left:1051px;top:439px" width="4" height="4" viewBox="0 0 4 4"><path d="M0 4 L3 0 L6 4 Z" fill="#777"/></svg>
<div class="t m" style="left:474.60px;top:437.38px;font-size:10.6px;line-height:10.6px;color:#222;font-family:'Liberation Mono', monospace;"><span style="color:#808080">element.style</span><span style="color:#222"> {</span></div>
<div class="t m" style="left:474.60px;top:451.08px;font-size:10.6px;line-height:10.6px;color:#222;font-family:'Liberation Mono', monospace;"><span style="color:#222">}</span></div>
<div class="b" style="left:470px;top:466px;width:578px;height:1px;background:#e6e6e6"></div>
<div class="t m" style="left:474.60px;top:471.58px;font-size:10.6px;line-height:10.6px;color:#222;font-family:'Liberation Mono', monospace;"><span style="color:#222">.navbar .navbar-inner {</span></div>
<div class="t m" style="left:956.46px;top:470.68px;font-size:10.6px;line-height:10.6px;color:#3a3a3a;font-family:'Liberation Mono', monospace;text-decoration:underline">skin.css:41466</div>
<div class="t m" style="left:491.90px;top:485.28px;font-size:10.6px;line-height:10.6px;color:#222;font-family:'Liberation Mono', monospace;"><span style="color:#c80000">background</span><span style="color:#222">:</span><svg width="6" height="8" viewBox="0 0 6 8" style="margin:0 4px 0 1px;vertical-align:-0.5px"><path d="M0 0 L6 4 L0 8 Z" fill="#6b6b6b"/></svg><span style="display:inline-block;width:10px;height:10px;background:#3280d2;border:1px solid #9aa;box-sizing:border-box;margin:0 3px 0 0;vertical-align:-1.5px"></span><span style="color:#222">#3280d2;</span></div>
<div class="t m" style="left:474.60px;top:498.88px;font-size:10.6px;line-height:10.6px;color:#222;font-family:'Liberation Mono', monospace;"><span style="color:#222">}</span></div>
<div class="b" style="left:470px;top:513.5px;width:578px;height:1px;background:#e6e6e6"></div>
<div class="t m" style="left:474.60px;top:518.28px;font-size:10.6px;line-height:10.6px;color:#222;font-family:'Liberation Mono', monospace;"><span style="color:#222">.navbar .navbar-inner, </span><span style="color:#808080">.navbar .btn-navbar</span><span style="color:#222"> {</span></div>
<div class="t m" style="left:956.46px;top:517.38px;font-size:10.6px;line-height:10.6px;color:#3a3a3a;font-family:'Liberation Mono', monospace;text-decoration:underline">skin.css:36044</div>
<div class="t m" style="left:491.90px;top:531.98px;font-size:10.6px;line-height:10.6px;color:#222;font-family:'Liberation Mono', monospace;text-decoration:line-through;text-decoration-color:#888"><span style="color:#808080">filter: progid:DXImageTransform.Microsoft.gradient(enabled=false)!important;</span></div>
<div class="t m" style="left:474.60px;top:545.58px;font-size:10.6px;line-height:10.6px;color:#222;font-family:'Liberation Mono', monospace;"><span style="color:#222">}</span></div>
<div class="b" style="left:470px;top:561px;width:578px;height:1px;background:#e6e6e6"></div>
<div class="t m" style="left:474.60px;top:565.38px;font-size:10.6px;line-height:10.6px;color:#222;font-family:'Liberation Mono', monospace;"><span style="color:#222">.navbar .navbar-inner {</span></div>
<div class="t m" style="left:956.46px;top:564.48px;font-size:10.6px;line-height:10.6px;color:#3a3a3a;font-family:'Liberation Mono', monospace;text-decoration:underline">skin.css:23005</div>
<div class="b" style="left:470px;top:562px;width:578px;height:142px;overflow:hidden">
<div class="t m" style="left:21.90px;top:17.08px;font-size:10.6px;line-height:10.6px;color:#222;font-family:'Liberation Mono', monospace;"><span style="color:#c80000">border</span><span style="color:#222">:</span><svg width="6" height="8" viewBox="0 0 6 8" style="margin:0 2.5px 0 1.5px;vertical-align:-0.5px"><path d="M0 0 L6 4 L0 8 Z" fill="#6b6b6b"/></svg><span style="color:#222">0;</span></div>
<div class="t m" style="left:21.90px;top:30.58px;font-size:10.6px;line-height:10.6px;color:#222;font-family:'Liberation Mono', monospace;text-decoration:line-through;text-decoration-color:#222"><span style="color:#c80000">-webkit-box-shadow</span><span style="color:#222">: none;</span></div>
<div class="t m" style="left:21.90px;top:44.08px;font-size:10.6px;line-height:10.6px;color:#222;font-family:'Liberation Mono', monospace;text-decoration:line-through;text-decoration-color:#888"><span style="color:#808080">-moz-box-shadow: none;</span></div>
<div class="t m" style="left:21.90px;top:57.58px;font-size:10.6px;line-height:10.6px;color:#222;font-family:'Liberation Mono', monospace;"><span style="color:#c80000">box-shadow</span><span style="color:#222">: none;</span></div>
<div class="t m" style="left:21.90px;top:71.08px;font-size:10.6px;line-height:10.6px;color:#222;font-family:'Liberation Mono', monospace;text-decoration:line-through;text-decoration-color:#666"><span style="color:#c80000">-webkit-border-radius</span><span style="color:#222">: 0;</span></div>
<div class="t m" style="left:21.90px;top:84.58px;font-size:10.6px;line-height:10.6px;color:#222;font-family:'Liberation Mono', monospace;text-decoration:line-through;text-decoration-color:#888"><span style="color:#808080">-moz-border-radius: 0;</span></div>
<div class="t m" style="left:21.90px;top:98.08px;font-size:10.6px;line-height:10.6px;color:#222;font-family:'Liberation Mono', monospace;"><span style="color:#c80000">border-radius</span><span style="color:#222">:</span><svg width="6" height="8" viewBox="0 0 6 8" style="margin:0 2.5px 0 1.5px;vertical-align:-0.5px"><path d="M0 0 L6 4 L0 8 Z" fill="#6b6b6b"/></svg><span style="color:#222">0;</span></div>
<div class="t m" style="left:21.90px;top:111.58px;font-size:10.6px;line-height:10.6px;color:#222;font-family:'Liberation Mono', monospace;"><span style="color:#c80000">margin</span><span style="color:#222">:</span><svg width="6" height="8" viewBox="0 0 6 8" style="margin:0 2.5px 0 1.5px;vertical-align:-0.5px"><path d="M0 0 L6 4 L0 8 Z" fill="#6b6b6b"/></svg><span style="color:#222">0;</span></div>
<div class="t m" style="left:21.90px;top:125.08px;font-size:10.6px;line-height:10.6px;color:#222;font-family:'Liberation Mono', monospace;"><span style="color:#c80000">padding-left</span><span style="color:#222">: 0;</span></div>
<div class="t m" style="left:21.90px;top:138.58px;font-size:10.6px;line-height:10.6px;color:#222;font-family:'Liberation Mono', monospace;"><span style="color:#c80000">padding-right</span><span style="color:#222">: 0;</span></div>
</div>
<div class="b" style="left:1047px;top:704px;width:6px;height:0px;"></div>
<svg class="b" style="left:0;top:0" width="1053" height="716" viewBox="0 0 1053 716">
<path d="M61 43.5 L102 284.5 L81.5 284.5 L81.5 525 L39.7 525 L39.7 284.5 L19.5 284.5 Z" stroke="#e8141c" stroke-width="4.4" fill="none" stroke-linejoin="round"/>
<path d="M645 487 L728.5 455 L728.5 470 L811 470 L811 502 L728.5 502 L728.5 516.5 Z" stroke="#e8141c" stroke-width="4" fill="none" stroke-linejoin="round"/>
</svg>
</body></html>
